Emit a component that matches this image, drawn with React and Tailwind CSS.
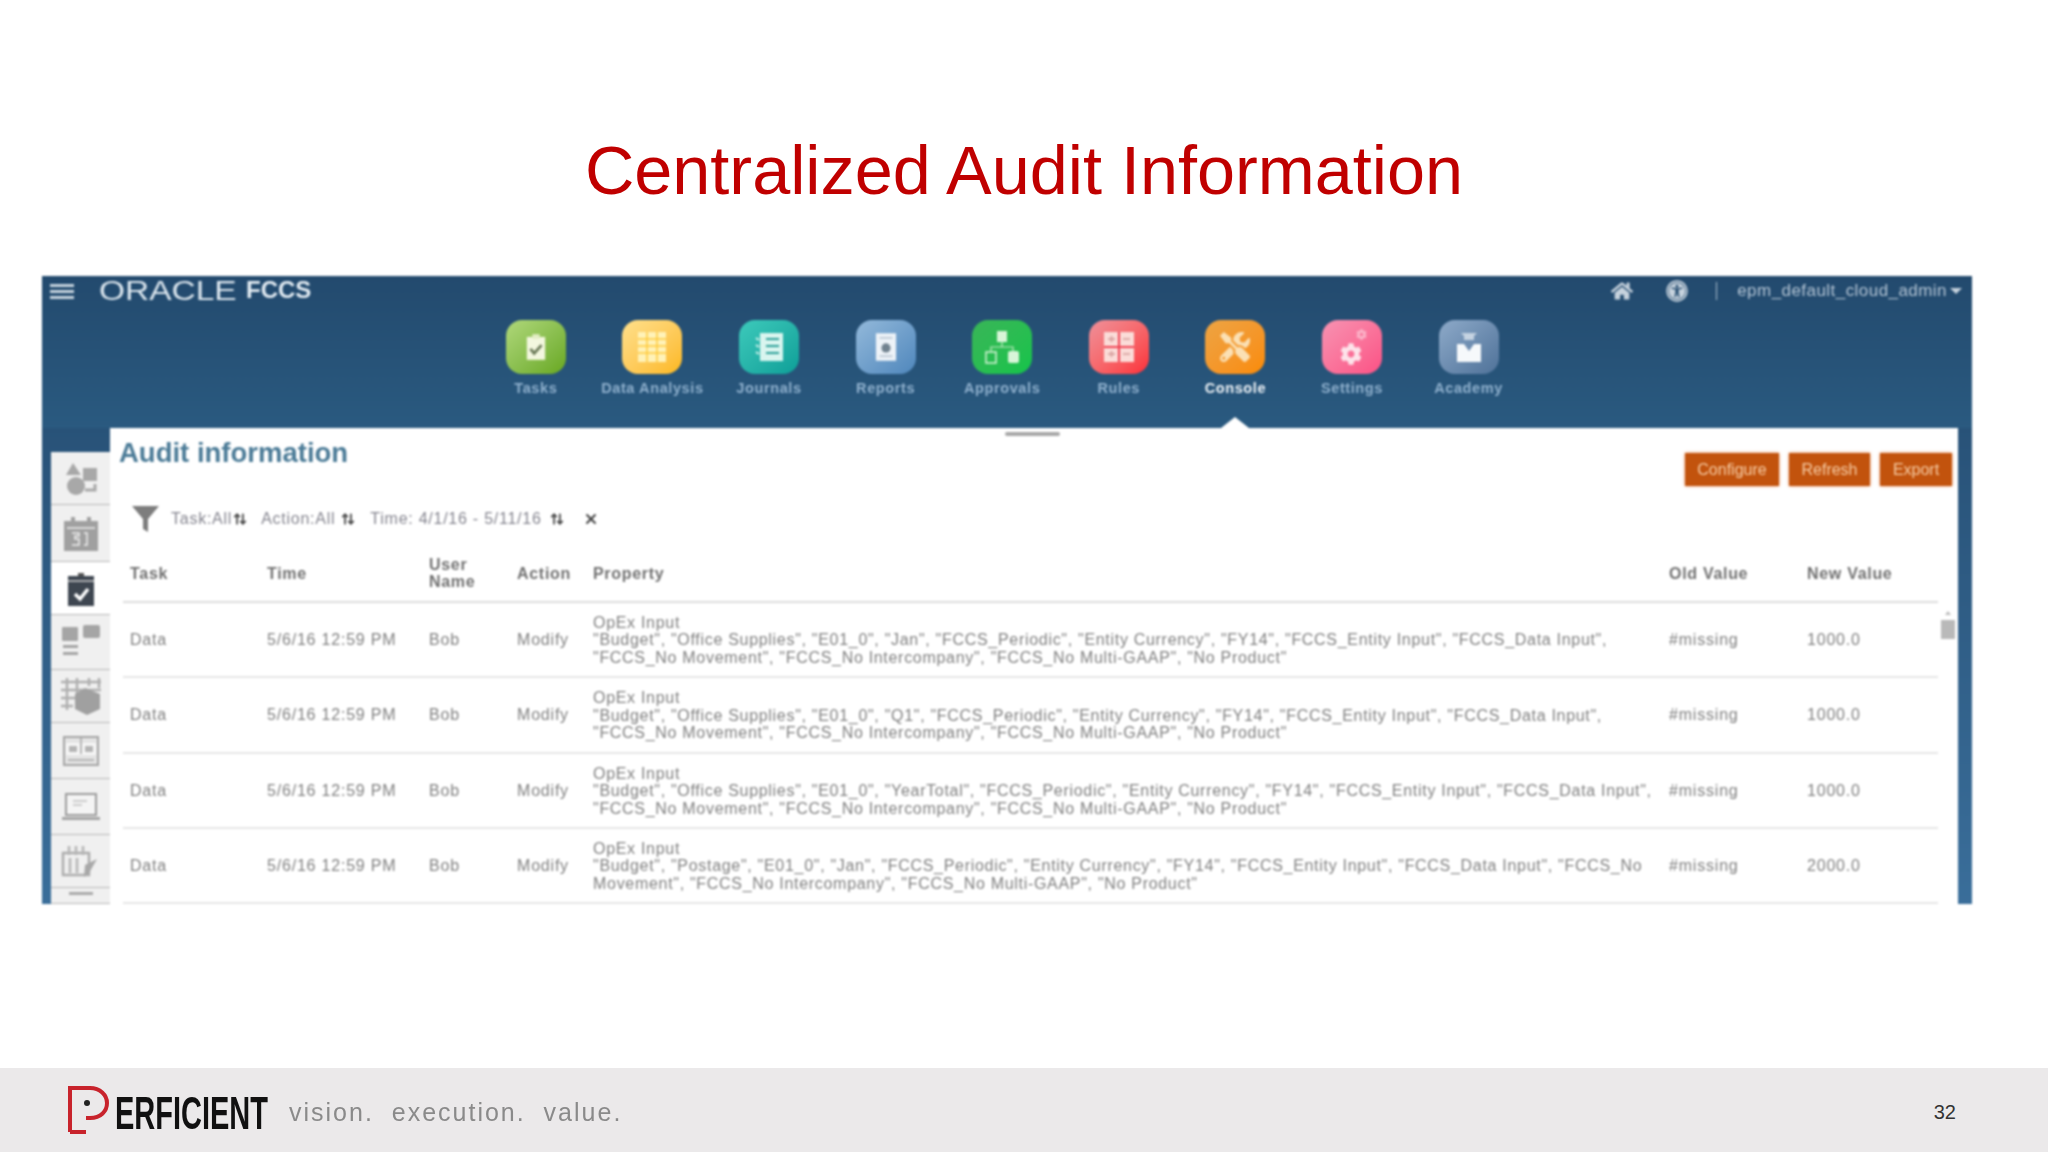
import React from "react";
import { FaHome, FaTools, FaUniversalAccess, FaCog } from "react-icons/fa";
import { LuArrowUpDown, LuX } from "react-icons/lu";

const TasksIcon = () => (
  <svg width="22" height="28" viewBox="0 0 24 30">
    <rect x="2" y="4" width="20" height="25" fill="#f3f7df" />
    <rect x="8" y="1" width="8" height="5" fill="#e3edc4" />
    <path d="M6 17l4 5 8-9" fill="none" stroke="#6b7a58" strokeWidth="3" />
  </svg>
);

const GridIcon = () => (
  <svg width="30" height="32" viewBox="0 0 30 32">
    <rect x="1" y="1" width="28" height="30" fill="#fff2b8" />
    <path d="M10 1v30M20 1v30M1 8h28M1 15h28M1 22h28" stroke="#ffc93a" strokeWidth="1.5" />
  </svg>
);

const JournalIcon = () => (
  <svg width="32" height="32" viewBox="0 0 32 32">
    <rect x="7" y="2" width="23" height="28" fill="#d9f5ef" />
    <path d="M13 8h13M13 15h13M13 22h13" stroke="#2a9f98" strokeWidth="2" />
    <path d="M3 7l3 2M3 14l3 2M3 21l3 2" stroke="#d9f5ef" strokeWidth="2" />
  </svg>
);

const ReportIcon = () => (
  <svg width="22" height="30" viewBox="0 0 24 32">
    <rect x="1" y="1" width="22" height="30" fill="#eef3f8" />
    <circle cx="12" cy="17" r="5" fill="#71828f" />
    <path d="M5 6h14M5 26h14" stroke="#a8b8c6" strokeWidth="1.5" />
  </svg>
);

const ApprovalIcon = () => (
  <svg width="36" height="34" viewBox="0 0 36 34">
    <rect x="13" y="1" width="10" height="11" fill="#d8f5d8" />
    <path d="M18 12v5M7 21v-4h22v4" fill="none" stroke="#c5ecc5" strokeWidth="1.2" />
    <rect x="2" y="22" width="10" height="11" fill="none" stroke="#d8f5d8" strokeWidth="1.5" />
    <rect x="24" y="21" width="11" height="12" rx="2" fill="#d8f5d8" />
  </svg>
);

const RulesIcon = () => (
  <svg width="32" height="32" viewBox="0 0 32 32">
    <rect x="1" y="1" width="30" height="30" fill="#fbdcd8" />
    <path d="M16 1v30M1 16h30" stroke="#f04050" strokeWidth="2" />
    <path d="M5 8h7M20 8h7M5 23h7M20 23h7M8.500 5v6M8.500 20v6" stroke="#d29a98" strokeWidth="1.5" />
  </svg>
);

const SettingsIcon = () => (
  <div className="relative w-[36px] h-[36px]">
    <FaCog size={11} className="absolute right-[3px] top-0 text-[#fbb3c8]" />
    <FaCog size={22} className="absolute left-[6px] bottom-0 text-[#fde3ea]" />
  </div>
);

const AcademyIcon = () => (
  <svg width="26" height="32" viewBox="0 0 26 32">
    <path d="M5 2h16l-3 3v4h-10v-4z" fill="#c5d3e2" />
    <path d="M1 13h7l5 7 5-7h7v18h-24z" fill="#f6f9fb" />
  </svg>
);

const navItems = [
  { label: "Tasks", icon: <TasksIcon />, color: "from-[#b0d87a] to-[#68a81c]" },
  { label: "Data Analysis", icon: <GridIcon />, color: "from-[#ffe08a] to-[#fcb814]" },
  { label: "Journals", icon: <JournalIcon />, color: "from-[#3ccabb] to-[#0a9f98]" },
  { label: "Reports", icon: <ReportIcon />, color: "from-[#93b9da] to-[#4f87bc]" },
  { label: "Approvals", icon: <ApprovalIcon />, color: "from-[#38b558] to-[#12c44a]" },
  { label: "Rules", icon: <RulesIcon />, color: "from-[#ee909a] to-[#fb2a38]" },
  { label: "Console", icon: <FaTools size={30} className="text-[#fbe0b4]" />, color: "from-[#eda442] to-[#fa8b00]", active: true },
  { label: "Settings", icon: <SettingsIcon />, color: "from-[#f792b2] to-[#fb5085]" },
  { label: "Academy", icon: <AcademyIcon />, color: "from-[#8eaac9] to-[#4f7299]" },
];

const sideTiles = [
  {
    h: "h-[53px]",
    icon: (
      <svg width="36" height="36" viewBox="0 0 36 36" fill="#a8a8a8">
        <path d="M3 15L10 3l8 12zM20 8h14v13H20z" />
        <circle cx="13" cy="26" r="9" />
        <path d="M22 30h10v-6" fill="none" stroke="#a8a8a8" strokeWidth="3" />
      </svg>
    ),
  },
  {
    h: "h-[57px]",
    icon: (
      <svg width="36" height="36" viewBox="0 0 36 36" fill="#a0a0a0">
        <path d="M1 6h34v30H1z" />
        <path d="M8 2h4v8H8zM24 2h4v8h-4z" />
        <path d="M4 13h28" stroke="#eee" strokeWidth="1.5" />
        <path d="M9 18h7v3h-4v3h4v6H9M21 18h3v12h-3" fill="none" stroke="#eee" strokeWidth="1.500" />
      </svg>
    ),
  },
  {
    h: "h-[53px]",
    active: true,
    icon: (
      <svg width="26" height="36" viewBox="0 0 26 36">
        <path d="M10 3h6v4h-6z" fill="#555" />
        <rect x="0" y="6" width="26" height="30" fill="#3e4650" />
        <path d="M0 11h26" stroke="#cfcfcf" strokeWidth="1.5" />
        <path d="M7 24l5 5 8-10" fill="none" stroke="#fff" strokeWidth="3.500" />
      </svg>
    ),
  },
  {
    h: "h-[55px]",
    icon: (
      <svg width="40" height="34" viewBox="0 0 40 34" fill="#a5a5a5">
        <rect x="1" y="2" width="16" height="14" rx="1" />
        <rect x="22" y="0" width="17" height="13" rx="2" />
        <path d="M2 20h15v3H2zM2 27h15v3H2z" />
      </svg>
    ),
  },
  {
    h: "h-[53px]",
    icon: (
      <svg width="42" height="38" viewBox="0 0 42 38">
        <path d="M1 5h40M1 13h40M1 21h22M1 29h12M7 1v32M17 1v16M29 1v8M39 1v10" stroke="#b0b0b0" strokeWidth="2.500" fill="none" />
        <path d="M25 11l15 6v15l-13 6-12-6V17z" fill="#a0a0a0" />
      </svg>
    ),
  },
  {
    h: "h-[56px]",
    icon: (
      <svg width="36" height="30" viewBox="0 0 36 30">
        <rect x="1" y="1" width="34" height="28" fill="#e4e4e4" stroke="#a5a5a5" strokeWidth="2" />
        <path d="M3 7h30v12H3z" fill="#f6f6f6" />
        <path d="M18 2v16M5 24h26" stroke="#b5b5b5" strokeWidth="2" />
        <path d="M6 10h8v6H6zM22 10h8v6h-8z" fill="#b5b5b5" />
      </svg>
    ),
  },
  {
    h: "h-[56px]",
    icon: (
      <svg width="38" height="28" viewBox="0 0 38 28">
        <path d="M4 1h30v21H4z" fill="#f4f4f4" stroke="#9c9c9c" strokeWidth="2" />
        <path d="M11 8h14M11 12h9" stroke="#c0c0c0" strokeWidth="1.500" />
        <path d="M0 24h38v3H0z" fill="#a5a5a5" />
      </svg>
    ),
  },
  {
    h: "h-[53px]",
    icon: (
      <svg width="40" height="36" viewBox="0 0 40 36">
        <path d="M2 10h26v22H2z" fill="none" stroke="#adadad" strokeWidth="2.500" />
        <path d="M8 3v9M15 3v9M22 3v9M9 15v15M16 15v15" stroke="#b5b5b5" strokeWidth="2.500" />
        <path d="M24 22l12-6-8 14-5 4z" fill="#a8a8a8" />
      </svg>
    ),
  },
  {
    h: "h-[16px]",
    icon: <div className="w-[24px] h-[3px] bg-[#aaa] mt-[4px] self-start" />,
  },
];

const rows = [
  {
    line2: '"Budget", "Office Supplies", "E01_0", "Jan", "FCCS_Periodic", "Entity Currency", "FY14", "FCCS_Entity Input", "FCCS_Data Input",',
    line3: '"FCCS_No Movement", "FCCS_No Intercompany", "FCCS_No Multi-GAAP", "No Product"',
    newValue: "1000.0",
  },
  {
    line2: '"Budget", "Office Supplies", "E01_0", "Q1", "FCCS_Periodic", "Entity Currency", "FY14", "FCCS_Entity Input", "FCCS_Data Input",',
    line3: '"FCCS_No Movement", "FCCS_No Intercompany", "FCCS_No Multi-GAAP", "No Product"',
    newValue: "1000.0",
  },
  {
    line2: '"Budget", "Office Supplies", "E01_0", "YearTotal", "FCCS_Periodic", "Entity Currency", "FY14", "FCCS_Entity Input", "FCCS_Data Input",',
    line3: '"FCCS_No Movement", "FCCS_No Intercompany", "FCCS_No Multi-GAAP", "No Product"',
    newValue: "1000.0",
  },
  {
    line2: '"Budget", "Postage", "E01_0", "Jan", "FCCS_Periodic", "Entity Currency", "FY14", "FCCS_Entity Input", "FCCS_Data Input", "FCCS_No',
    line3: 'Movement", "FCCS_No Intercompany", "FCCS_No Multi-GAAP", "No Product"',
    newValue: "2000.0",
  },
];

const tableCols = "grid grid-cols-[137px_162px_88px_76px_1076px_138px_131px] pl-[7px] items-center";

const FilterChip = ({ label, className, gap }) => (
  <div className={`flex items-center ${className}`}>
    <span>{label}</span>
    <LuArrowUpDown size={14} strokeWidth={3} className={`text-[#444] ${gap}`} />
  </div>
);

const App = () => {
  return (
    <div className="w-[2048px] h-[1152px] flex flex-col bg-white font-['Liberation_Sans',Arial,sans-serif] overflow-hidden">
      <div className="h-[276px] shrink-0 pt-[134px]">
        <h1 className="text-center text-[68.400px] leading-[72px] text-[#c00000]">Centralized Audit Information</h1>
      </div>

      <div className="mx-[42px] w-[1930px] h-[628px] shrink-0 flex flex-col overflow-hidden bg-linear-to-b from-[#234a6e] to-[#3a6e9a] blur-[0.8px]">
        {/* top bar + launcher */}
        <div className="h-[152px] shrink-0 flex flex-col relative bg-linear-to-b from-[#234a6e] to-[#2a5a80]">
          <div className="h-[30px] mb-[14px] flex items-center pl-[8px] pr-[10px]">
            <div className="w-[24px] flex flex-col gap-[3px]">
              <div className="h-[3px] bg-[#c5d3de]" />
              <div className="h-[3px] bg-[#c5d3de]" />
              <div className="h-[3px] bg-[#c5d3de]" />
            </div>
            <span className="ml-[25px] text-[27px] leading-none text-[#dbe6ee] scale-x-[1.24] origin-left w-[147px]">ORACLE</span>
            <span className="text-[24px] leading-none font-bold text-[#e2ebf2] -mt-[2px]">FCCS</span>
            <div className="flex-1" />
            <FaHome size={22} className="text-[#c6d2dd]" />
            <FaUniversalAccess size={22} className="text-[#c6d2dd] ml-[33px]" />
            <div className="w-px h-[18px] bg-[#a8bccd] ml-[28px]" />
            <span className="ml-[20px] text-[17px] tracking-[0.45px] text-[#b3c4d4]">epm_default_cloud_admin</span>
            <div className="ml-[3px] w-0 h-0 border-x-[6px] border-x-transparent border-t-[6px] border-t-[#c6d2dd]" />
          </div>

          <div className="flex pl-[435.500px]">
            {navItems.map((item) => (
              <div key={item.label} className="w-[116.600px] flex flex-col items-center">
                <div className={`w-[60px] h-[54px] rounded-[16px] flex items-center justify-center bg-linear-to-br ${item.color}`}>
                  {item.icon}
                </div>
                <span className={`mt-[6px] text-[14.500px] tracking-[0.6px] leading-[16px] font-bold whitespace-nowrap ${item.active ? "text-[#eef3f7]" : "text-[#8fb0cd]"}`}>
                  {item.label}
                </span>
              </div>
            ))}
          </div>

          {/* active marker */}
          <div className="absolute left-[1179px] bottom-0 w-0 h-0 border-x-[14px] border-x-transparent border-b-[11px] border-b-white" />
        </div>

        <div className="flex-1 flex min-h-0">
          {/* left tabs */}
          <div className="w-[68px] shrink-0 pt-[24px] pl-[9px]">
            <div className="flex flex-col">
              {sideTiles.map((tile, i) => (
                <div
                  key={i}
                  className={`${tile.h} shrink-0 flex items-center justify-center overflow-hidden border-b border-[#b8b8b8] ${tile.active ? "bg-white" : "bg-[#f0f0f0]"}`}
                >
                  {tile.icon}
                </div>
              ))}
            </div>
          </div>

          {/* main panel */}
          <div className="w-[1848px] shrink-0 bg-white relative">
            <div className="absolute left-[895px] top-[4px] w-[55px] h-[4px] rounded-sm bg-[#a8a8a8]" />

            <div className="flex items-start justify-between pt-[9px] pl-[9px] pr-[6px] h-[58px]">
              <h2 className="text-[27.500px] leading-[32px] font-bold text-[#4b7b97]">Audit information</h2>
              <div className="flex gap-[10px] mt-[16px]">
                <button className="h-[33px] w-[94px] bg-[#c2530d] text-[#f7cda6] text-[16px] shadow-[0_0_3px_#e8905a]">Configure</button>
                <button className="h-[33px] w-[81px] bg-[#c2530d] text-[#f7cda6] text-[16px] shadow-[0_0_3px_#e8905a]">Refresh</button>
                <button className="h-[33px] w-[72px] bg-[#c2530d] text-[#f7cda6] text-[16px] shadow-[0_0_3px_#e8905a]">Export</button>
              </div>
            </div>

            <div className="mt-[16px] h-[34px] flex items-center pl-[22px] text-[16px] tracking-[0.75px] text-[#85858f] whitespace-nowrap">
              <svg width="27" height="26" viewBox="0 0 27 26" fill="#7d7d7d">
                <path d="M0 0h27L16 13v13l-5-3V13z" />
              </svg>
              <FilterChip label="Task:All" className="ml-[12px]" gap="ml-[1px]" />
              <FilterChip label="Action:All" className="ml-[14px]" gap="ml-[6px]" />
              <FilterChip label="Time: 4/1/16 - 5/11/16" className="ml-[15px]" gap="ml-[8px]" />
              <LuX size={16} strokeWidth={3} className="text-[#444] ml-[19px]" />
            </div>

            <div className="flex pl-[13px]">
              <div className="w-[1815px] shrink-0">
                <div className={`${tableCols} h-[67px] pt-[9px] border-b-2 border-[#dcdcdc] text-[16px] tracking-[0.7px] leading-[17px] font-bold text-[#707070]`}>
                  <span>Task</span>
                  <span>Time</span>
                  <span>User<br />Name</span>
                  <span>Action</span>
                  <span>Property</span>
                  <span>Old Value</span>
                  <span>New Value</span>
                </div>
                {rows.map((row, i) => (
                  <div key={i} className={`${tableCols} h-[75.330px] pt-[1px] border-b-2 border-[#e6e6e6] text-[16px] tracking-[0.8px] text-[#808080]`}>
                    <span>Data</span>
                    <span>5/6/16 12:59 PM</span>
                    <span>Bob</span>
                    <span>Modify</span>
                    <div className="leading-[17.500px] tracking-[0.7px] whitespace-nowrap">
                      <div>OpEx Input</div>
                      <div>{row.line2}</div>
                      <div>{row.line3}</div>
                    </div>
                    <span>#missing</span>
                    <span>{row.newValue}</span>
                  </div>
                ))}
              </div>

              {/* scroll bar */}
              <div className="w-[20px] pt-[75px] flex flex-col items-center">
                <div className="w-0 h-0 border-x-[3px] border-x-transparent border-b-[4px] border-b-[#bbb]" />
                <div className="w-[14px] h-[19px] mt-[5px] bg-[#b9b9b9]" />
              </div>
            </div>
          </div>
        </div>
      </div>

      <div className="flex-1" />

      <div className="h-[84px] shrink-0 bg-[#ebe9ea] flex items-center pl-[68px] pr-[92px]">
        <div className="flex items-center blur-[0.5px]">
          <svg width="42" height="48" viewBox="0 0 42 48" className="shrink-0">
            <path d="M2 46V2h20c10 0 17 7 17 15s-6 15-17 15h-4" fill="none" stroke="#c8232c" strokeWidth="4" />
            <path d="M2 46h16" fill="none" stroke="#c8232c" strokeWidth="4" />
            <circle cx="19" cy="17" r="3" fill="#222" />
          </svg>
          <span className="text-[46px] leading-none font-bold text-[#111] scale-x-[0.63] origin-left w-[160px] ml-[5px] mt-[6px]">ERFICIENT</span>
          <span className="text-[25px] tracking-[2px] text-[#8a8a8a] whitespace-pre ml-[14px] mt-[5px]">vision.  execution.  value.</span>
        </div>
        <div className="flex-1" />
        <span className="text-[20px] text-[#333] mt-[3px]">32</span>
      </div>
    </div>
  );
};

export default App;
